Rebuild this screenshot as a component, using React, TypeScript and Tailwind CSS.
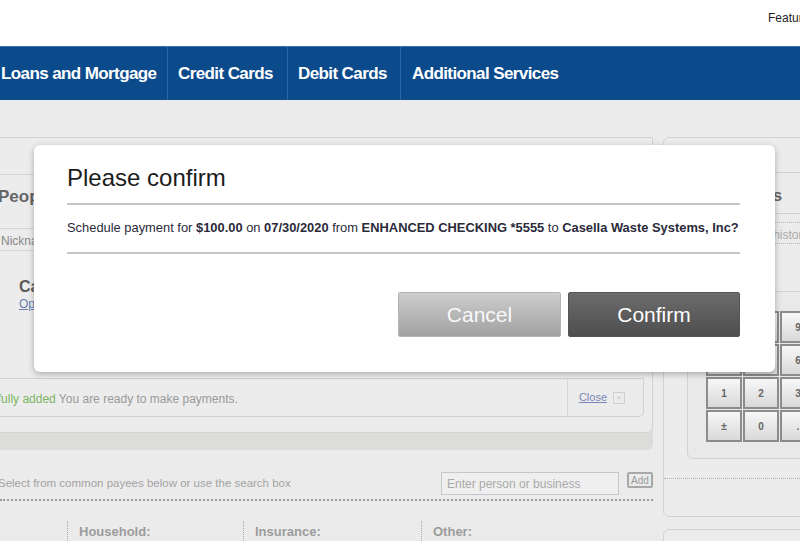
import { Fragment } from "react";

const navItems = [
  { label: "Loans and Mortgage", className: "w-[168px] pl-[1px]" },
  { label: "Credit Cards", className: "w-[120px] pl-[10px]" },
  { label: "Debit Cards", className: "w-[113px] pl-[10px]" },
  { label: "Additional Services", className: "pl-[11px] border-r-0" },
];

const keys = ["7", "8", "9", "4", "5", "6", "1", "2", "3", "±", "0", "."];

function Keypad() {
  return (
    <div className="ml-[23px] mt-[47px] h-[168px] rounded-bl-[6px] border border-[#d2d2d2] bg-[#e9e9e9] pl-[18px] pt-[19px]">
      <div className="grid w-[110px] grid-cols-3 gap-[1px]">
        {keys.map((k) => (
          <div
            key={k}
            className="flex h-[32px] items-center justify-center border-2 border-[#8c8c8c] bg-gradient-to-b from-[#f7f7f7] to-[#d9d9d9] text-[10px] font-bold text-[#666]"
          >
            {k}
          </div>
        ))}
      </div>
    </div>
  );
}

function ConfirmModal() {
  return (
    <div className="absolute left-[34px] top-[145px] h-[227px] w-[741px] rounded-[6px] bg-white px-[35px] pb-[35px] pl-[33px] pt-[19px] shadow-[0_2px_6px_rgba(0,0,0,0.28)]">
      <h2 className="text-[24px] leading-[28px] text-[#1c1c1c]">Please confirm</h2>
      <div className="mt-[11px] h-[2px] bg-[#c6c6c6]" />
      <p className="mt-[15px] whitespace-nowrap text-[12.9px] leading-[16px] text-[#2a2a3a]">
        Schedule payment for <b>$100.00</b> on <b>07/30/2020</b> from{" "}
        <b>ENHANCED CHECKING *5555</b> to <b>Casella Waste Systems, Inc?</b>
      </p>
      <div className="mt-[16px] h-[2px] bg-[#c6c6c6]" />
      <div className="mt-[38px] flex justify-end gap-[7px]">
        <button className="h-[45px] w-[163px] rounded-[2px] border border-[#b4b4b4] bg-gradient-to-b from-[#cdcdcd] to-[#a2a2a2] text-[21px] text-[#f8f8f8]">
          Cancel
        </button>
        <button className="h-[45px] w-[172px] rounded-[2px] border border-[#555] bg-gradient-to-b from-[#6c6c6c] to-[#4e4e4e] text-[21px] text-white">
          Confirm
        </button>
      </div>
    </div>
  );
}

export default function App() {
  return (
    <div className="relative h-[541px] w-[800px] overflow-hidden bg-[#ebebeb] font-['Liberation_Sans',Arial,sans-serif]">
      {/* top header */}
      <div className="h-[46px] whitespace-nowrap bg-white pl-[768px] pt-[9px] text-[12px] text-[#222]">
        Features
      </div>

      {/* main nav */}
      <nav className="flex h-[54px] items-stretch border-t border-[#3a6fa8] bg-[#0b4a8b] text-white">
        {navItems.map((item) => (
          <div
            key={item.label}
            className={`flex items-center whitespace-nowrap border-r border-[#2c66a6] text-[17px] font-bold tracking-[-0.6px] ${item.className}`}
          >
            {item.label}
          </div>
        ))}
      </nav>

      {/* page body */}
      <div className="flex gap-[10px] pt-[37px]">
        {/* left column */}
        <div className="w-[653px] shrink-0">
          <div className="-ml-[10px] rounded-br-[6px] bg-[#dcdcda] pb-[17px]">
            <div className="h-[296px] rounded-br-[6px] border border-[#d2d2d2] bg-[#ececec]">
              <div className="h-[37px] border-b border-[#d6d6d6]" />
              <div className="h-[54px] border-b border-[#d6d6d6] pl-[7px] pt-[9px] text-[17px] font-bold text-[#666]">
                People I Pay
              </div>
              <div className="h-[22px] border-b border-[#d6d6d6] pl-[10px] pt-[3px] text-[12px] text-[#888]">
                Nickname
              </div>
              <div className="pl-[28px] pt-[27px]">
                <div className="text-[16px] font-bold leading-[18px] text-[#5a5a5a]">
                  Casella Waste Systems, Inc
                </div>
                <div className="text-[12px] leading-[16px] text-[#6a7fb0] underline">Options</div>
              </div>
              <div className="mr-[8px] mt-[66px] flex h-[39px] items-center rounded-br-[5px] border border-[#d2d2d2]">
                <div className="-ml-[75px] flex-1 whitespace-nowrap pt-[2px] text-[12px] text-[#999]">
                  <span className="text-[#7cb565]">Payee successfully added</span> You are ready to make payments.
                </div>
                <div className="flex h-full items-center gap-[6px] border-l border-[#d6d6d6] pl-[11px] pr-[18px]">
                  <span className="text-[11px] text-[#7a86b8] underline">Close</span>
                  <span className="flex h-[12px] w-[12px] items-center justify-center border border-[#d0d0d0] text-[8px] text-[#c4c4c4]">
                    ×
                  </span>
                </div>
              </div>
            </div>
          </div>

          <div className="flex items-center justify-between pt-[22px]">
            <span className="-ml-[2px] whitespace-nowrap text-[11.5px] text-[#a3a3a3]">
              Select from common payees below or use the search box
            </span>
            <div className="flex items-start gap-[8px]">
              <div className="flex h-[23px] w-[178px] items-center border border-[#c6c6cc] bg-[#efefef] pl-[5px] text-[12px] text-[#aaa]">
                Enter person or business
              </div>
              <div className="flex h-[16px] w-[26px] items-center justify-center rounded-[2px] border-2 border-[#a8a8a8] text-[10px] text-[#999]">
                Add
              </div>
            </div>
          </div>
          <div className="mt-[4px] border-t-2 border-dotted border-[#9a9a9a]" />

          <div className="mt-[20px] flex">
            {[
              { t: "Household:", w: "w-[176px]", ml: "ml-[67px]" },
              { t: "Insurance:", w: "w-[178px]", ml: "" },
              { t: "Other:", w: "w-[160px]", ml: "" },
            ].map((c) => (
              <Fragment key={c.t}>
                <div className={`${c.w} ${c.ml} h-[40px] border-l border-dotted border-[#aaa] pl-[11px] pt-[1px] text-[13px] font-bold text-[#9c9c9c]`}>
                  {c.t}
                </div>
              </Fragment>
            ))}
          </div>
        </div>

        {/* right column */}
        <div className="w-[200px] shrink-0">
          <div className="h-[380px] rounded-l-[6px] border border-[#d2d2d2] bg-[#ececec]">
            <div className="h-[35px] border-b border-[#d2d2d2]" />
            <div className="h-[41px] border-b border-[#d0d0d0] pl-[38px] pt-[10px] text-[17px] font-bold text-[#666]">
              Payments
            </div>
            <div className="mt-[8px] h-[22px] whitespace-nowrap border-y border-dotted border-[#b8b8b8] pl-[80px] pt-[3px] text-[12px] text-[#aaa]">
              View history
            </div>
            <Keypad />
            <div className="mt-[19px] border-t border-dotted border-[#b0b0b0]" />
          </div>
          <div className="mt-[12px] h-[40px] rounded-l-[6px] border border-[#d2d2d2] bg-[#ececec]" />
        </div>
      </div>

      <ConfirmModal />
    </div>
  );
}
